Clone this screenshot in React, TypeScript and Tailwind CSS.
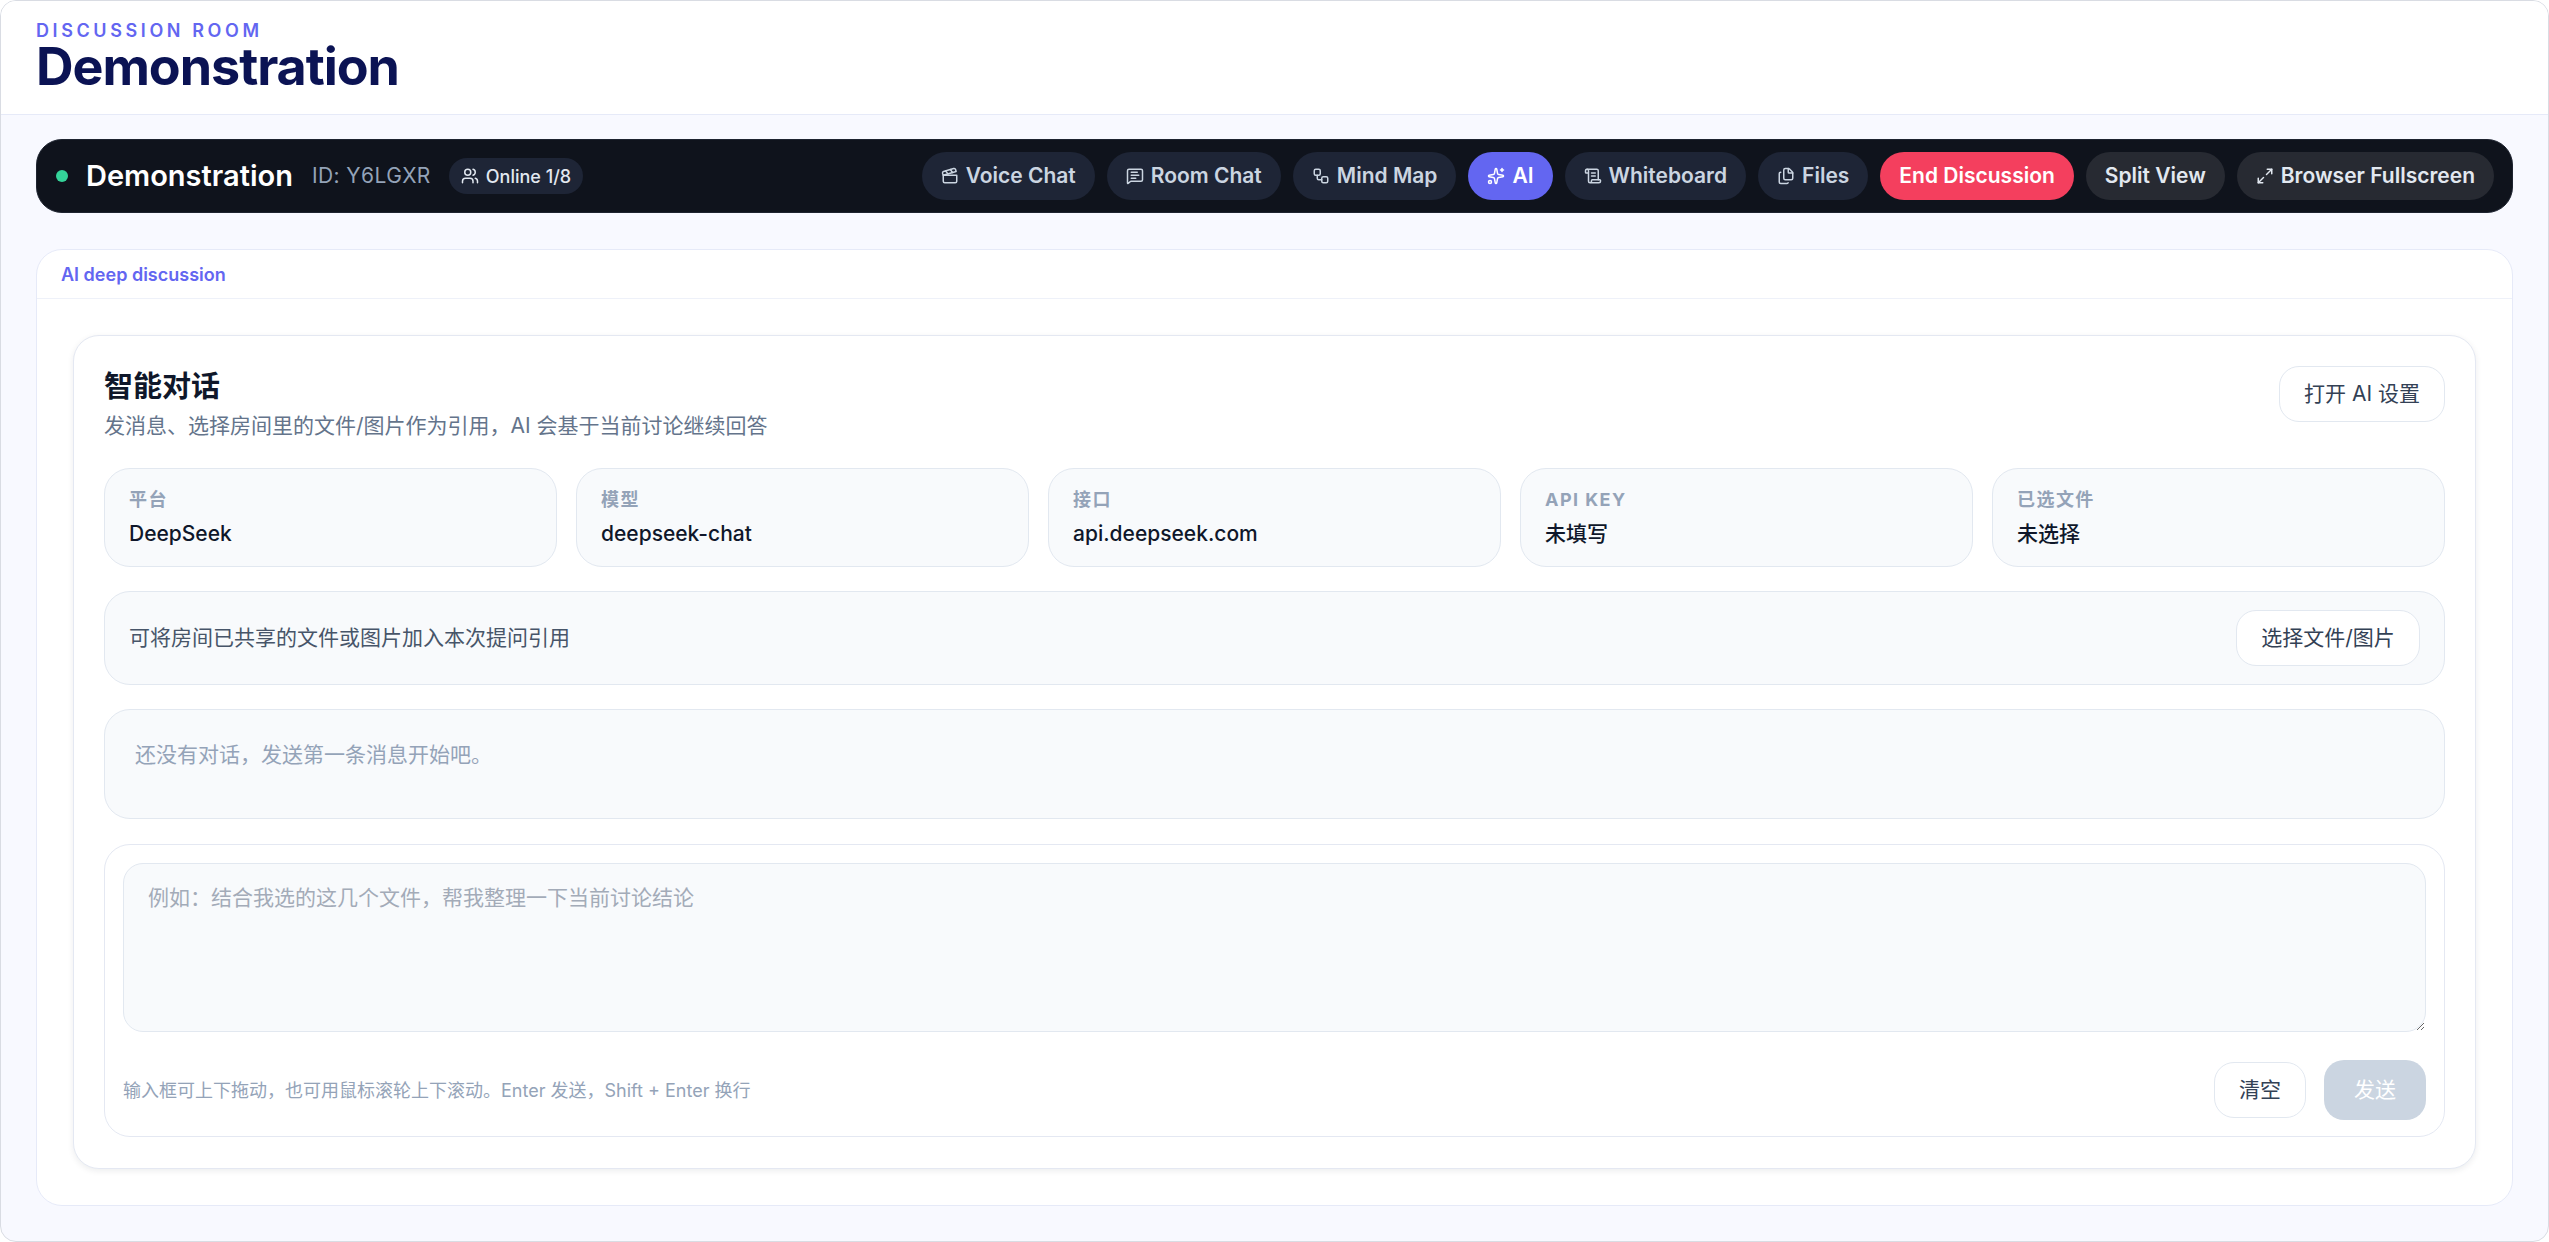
import { Clapperboard, Files, Maximize2, MessageSquareText, ScrollText, Sparkles, Users, Workflow } from 'lucide-react';
import type { ReactNode } from 'react';

const navItems = [
    { label: 'Voice Chat', icon: <Clapperboard size={18} /> },
    { label: 'Room Chat', icon: <MessageSquareText size={18} /> },
    { label: 'Mind Map', icon: <Workflow size={18} /> },
];

const infoCards = [
    { label: '平台', value: 'DeepSeek' },
    { label: '模型', value: 'deepseek-chat' },
    { label: '接口', value: 'api.deepseek.com' },
    { label: 'API KEY', value: '未填写' },
    { label: '已选文件', value: '未选择' },
];

function NavButton({ icon, children, className }: { icon?: ReactNode; children: ReactNode; className: string }) {
    return (
        <button className={`flex h-12 items-center gap-[7px] rounded-full px-[19px] text-[21px] font-semibold ${className}`}>
            {icon}
            <span>{children}</span>
        </button>
    );
}

export default function App() {
    return (
        <div className="flex h-[1242px] flex-col overflow-hidden rounded-[16px] border border-[#d9dce3] bg-[#f8f9ff] font-['Inter','Noto_Sans_CJK_SC',sans-serif]">
            <header className="h-[114px] shrink-0 border-b border-[#e6eaf8] bg-white pl-[35px] pt-[19px]">
                <div className="text-[18px] leading-[22px] font-semibold tracking-[0.2em] text-[#6366f1]">DISCUSSION ROOM</div>
                <h1 className="text-[52px] leading-[50px] font-bold tracking-[-0.02em] text-[#0b1354]">Demonstration</h1>
            </header>

            <main className="flex flex-1 flex-col gap-9 px-[35px] pt-[24px]">
                <div className="flex h-[74px] shrink-0 items-center justify-between rounded-[26px] border border-[#1e2430] bg-[#0f131c] pl-[19px] pr-[18px]">
                    <div className="flex items-center">
                        <span className="h-3 w-3 rounded-full bg-[#34d399]" />
                        <span className="ml-[18px] text-[29px] font-semibold text-white">Demonstration</span>
                        <span className="ml-[19px] text-[21px] tracking-[0.02em] text-[#94a3b8]">ID: Y6LGXR</span>
                        <span className="ml-[18px] flex h-9 items-center gap-[7px] rounded-full bg-[#1e2536] px-[12px] text-[18px] font-medium text-[#e2e8f0]">
                            <Users size={18} />
                            Online 1/8
                        </span>
                    </div>
                    <nav className="flex items-center gap-3">
                        {navItems.map((item) => (
                            <NavButton key={item.label} icon={item.icon} className="bg-[#1e2536] text-[#cbd5e1]">{item.label}</NavButton>
                        ))}
                        <NavButton icon={<Sparkles size={18} />} className="bg-[#6366f1] text-white">AI</NavButton>
                        <NavButton icon={<ScrollText size={18} />} className="bg-[#1e2536] text-[#cbd5e1]">Whiteboard</NavButton>
                        <NavButton icon={<Files size={18} />} className="bg-[#1e2536] text-[#cbd5e1]">Files</NavButton>
                        <NavButton className="bg-[#f43f5e] text-white">End Discussion</NavButton>
                        <NavButton className="bg-[#272a32] text-[#e2e8f0]">Split View</NavButton>
                        <NavButton icon={<Maximize2 size={18} />} className="bg-[#272a32] text-[#e2e8f0]">Browser Fullscreen</NavButton>
                    </nav>
                </div>

                <section className="flex h-[957px] shrink-0 flex-col rounded-[26px] border border-[#e6eaf8] bg-white">
                    <div className="flex h-[49px] shrink-0 items-center border-b border-[#eef1f9] pl-[24px] text-[18px] font-semibold text-[#6366f1]">AI deep discussion</div>

                    <div className="mx-[36px] mt-[36px] flex h-[834px] flex-col rounded-[26px] border border-[#e4e8f2] bg-white px-[30px] shadow-[0_2px_6px_rgba(15,23,42,0.08)]">
                        <div className="flex h-[132px] shrink-0 items-start justify-between">
                            <div className="pt-[30px]">
                                <h2 className="text-[29px] leading-[42px] font-bold text-[#0f172a]">智能对话</h2>
                                <p className="mt-[2px] text-[21px] leading-[32px] text-[#64748b]">发消息、选择房间里的文件/图片作为引用，AI 会基于当前讨论继续回答</p>
                            </div>
                            <button className="mt-[30px] h-14 w-[166px] rounded-[20px] border border-[#e2e8f0] bg-white text-[21px] text-[#334155]">打开 AI 设置</button>
                        </div>

                        <div className="grid h-[99px] shrink-0 grid-cols-5 gap-[19px]">
                            {infoCards.map((card) => (
                                <div key={card.label} className="rounded-[26px] border border-[#e2e8f0] bg-[#f8fafc] px-[24px] pt-[18px]">
                                    <div className="text-[18px] leading-[26px] font-bold tracking-[0.08em] text-[#94a3b8]">{card.label}</div>
                                    <div className="mt-[5px] text-[21px] leading-[32px] font-medium text-[#0f172a]">{card.value}</div>
                                </div>
                            ))}
                        </div>

                        <div className="mt-[24px] flex h-[94px] shrink-0 items-center justify-between rounded-[26px] border border-[#e2e8f0] bg-[#f8fafc] pl-[24px] pr-[24px]">
                            <span className="text-[21px] text-[#475569]">可将房间已共享的文件或图片加入本次提问引用</span>
                            <button className="h-14 w-[184px] rounded-[20px] border border-[#e2e8f0] bg-white text-[21px] text-[#334155]">选择文件/图片</button>
                        </div>

                        <div className="mt-[24px] h-[110px] shrink-0 rounded-[26px] border border-[#e2e8f0] bg-[#f8fafc] pl-[30px] pt-[29px] text-[21px] leading-[32px] text-[#94a3b8]">还没有对话，发送第一条消息开始吧。</div>

                        <div className="mt-[25px] flex h-[293px] shrink-0 flex-col rounded-[26px] border border-[#e4e8f2] bg-white px-[18px] pt-[18px]">
                            <textarea
                                className="block h-[169px] w-full resize-y rounded-[20px] border border-[#e2e8f0] bg-[#f8fafc] px-[24px] py-[18px] text-[21px] leading-[32px] text-[#0f172a] outline-none placeholder:text-[#a3abb8]"
                                placeholder="例如：结合我选的这几个文件，帮我整理一下当前讨论结论"
                            />
                            <div className="mt-[28px] flex items-center justify-between">
                                <span className="text-[18px] text-[#94a3b8]">输入框可上下拖动，也可用鼠标滚轮上下滚动。Enter 发送，Shift + Enter 换行</span>
                                <div className="flex items-center gap-[18px]">
                                    <button className="h-14 w-[92px] rounded-[20px] border border-[#e2e8f0] bg-white text-[21px] text-[#334155]">清空</button>
                                    <button className="h-[60px] w-[102px] rounded-[20px] bg-[#cbd5e1] text-[21px] text-white">发送</button>
                                </div>
                            </div>
                        </div>
                    </div>
                </section>
            </main>
        </div>
    );
}
